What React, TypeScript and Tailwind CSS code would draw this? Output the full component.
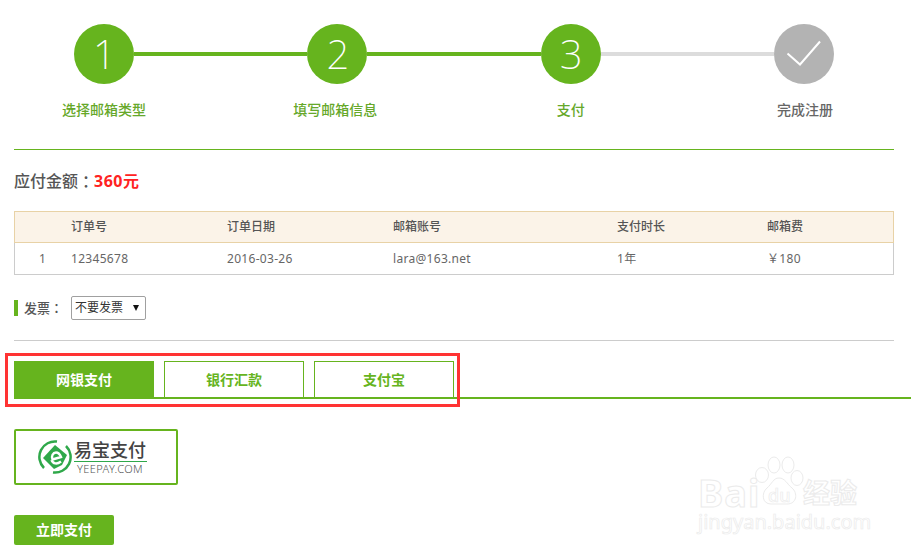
const steps = [
  { label: "选择邮箱类型", mark: "1", done: true, nudge: "" },
  { label: "填写邮箱信息", mark: "2", done: true, nudge: "-ml-1" },
  { label: "支付", mark: "3", done: true, nudge: "" },
  { label: "完成注册", mark: "", done: false, nudge: "ml-[2px]" },
];

const columns = "grid grid-cols-[56px_156px_166px_224px_150px_1fr] items-center";

const Colon = () => <span className="font-['Noto_Sans_CJK_TC']">：</span>;

const Stepper = () => (
  <div className="ml-[74px] flex w-[760px]">
    {steps.map((step, index) => (
      <div key={step.label} className={index < 3 ? "flex flex-1" : "flex"}>
        <div className="flex w-[60px] flex-col items-center">
          <div
            className={`flex h-[60px] w-[60px] items-center justify-center rounded-full pl-[1px] text-[40px] font-extralight text-white ${
              step.done ? "bg-[#66b41e]" : "bg-[#b3b3b3]"
            }`}
          >
            {step.mark || (
              <svg width="36" height="28" viewBox="0 0 36 28" fill="none">
                <path d="M1.5 13.5 14 24.5 34 1.5" stroke="#fff" strokeWidth="2" />
              </svg>
            )}
          </div>
          <div
            className={`mt-4 whitespace-nowrap text-sm font-medium leading-5 ${step.nudge} ${
              step.done ? "text-[#66a82a]" : "text-[#666]"
            }`}
          >
            {step.label}
          </div>
        </div>
        {index < 3 && (
          <div
            className={`mt-[28px] h-1 flex-1 ${
              index < 2 ? "bg-[#66b41e]" : "bg-[#dcdcdc]"
            }`}
          />
        )}
      </div>
    ))}
  </div>
);

const OrderTable = () => (
  <div className="mt-[18px] text-xs text-[#666]">
    <div className={`${columns} h-[32px] border border-[#e8d2a6] bg-[#fbf3e8] font-medium text-[#555]`}>
      <span />
      <span>订单号</span>
      <span>订单日期</span>
      <span>邮箱账号</span>
      <span>支付时长</span>
      <span>邮箱费</span>
    </div>
    <div className={`${columns} h-[32px] border border-t-0 border-[#ccc] tracking-[0.3px]`}>
      <span className="pl-[24px]">1</span>
      <span>12345678</span>
      <span>2016-03-26</span>
      <span>lara@163.net</span>
      <span>1年</span>
      <span>￥180</span>
    </div>
  </div>
);

const YeepayLogo = () => (
  <div className="mt-[30px] flex h-14 w-[164px] items-center justify-center gap-[2px] rounded-[2px] border-2 border-[#66b41e] bg-white pr-2">
    <svg width="34" height="34" viewBox="0 0 34 34" fill="none">
      <path d="M6 28A15.5 15.5 0 0 1 19 1.6" stroke="#2fa84a" strokeWidth="2.5" />
      <path d="M28 6A15.5 15.5 0 0 1 15 32.4" stroke="#2fa84a" strokeWidth="2.5" />
      <path d="M17 5 29 15 24 25 16 29 5 18Z" fill="#2fa84a" />
      <path
        d="M23 17 14.5 19.5C13 16 15 12.5 18 12.5 20.5 12.5 22 14.5 23 17ZM13.5 20C15 24 19 24.5 23 21.5"
        stroke="#fff"
        strokeWidth="2.4"
      />
    </svg>
    <div className="flex w-[73px] flex-col items-center">
      <span className="text-lg font-medium leading-[22px] text-[#444]">易宝支付</span>
      <span className="h-px w-full bg-[#2fa84a]" />
      <span className="mt-[1px] text-[11px] font-light leading-3 tracking-[0.4px] text-[#555]">YEEPAY.COM</span>
    </div>
  </div>
);

const Watermark = () => (
  <div className="absolute left-[698px] top-[456px] h-[76px] w-[165px] text-white">
    <span className="absolute left-0 top-[19px] text-[38px] font-bold leading-[34px] tracking-[1px] [-webkit-text-stroke:1px_#ebebeb]">
      Bai
    </span>
    <svg className="absolute left-[56px] top-0" width="50" height="50" viewBox="0 0 50 50" fill="#fff" stroke="#ebebeb" strokeWidth="1">
      <ellipse cx="8" cy="19" rx="6.5" ry="7.5" />
      <ellipse cx="20" cy="9" rx="6" ry="8" />
      <ellipse cx="34" cy="9" rx="6" ry="8" />
      <ellipse cx="43" cy="22" rx="6" ry="7.5" />
      <path d="M25 22C19 22 18 28 13 32 7 37 8 48 17 48L33 48C43 48 44 37 38 32 33 28 31 22 25 22Z" />
    </svg>
    <span className="absolute left-[70px] top-[29px] text-lg font-medium leading-5 text-white [-webkit-text-stroke:0.7px_#ebebeb]">
      du
    </span>
    <span className="absolute left-[105px] top-[22px] text-[27px] font-bold leading-[30px] [-webkit-text-stroke:1px_#ebebeb]">
      经验
    </span>
    <span className="absolute left-0 top-[55px] whitespace-nowrap text-[20px] leading-[22px] [-webkit-text-stroke:0.7px_#ebebeb]">
      jingyan.baidu.com
    </span>
  </div>
);

export default function App() {
  return (
    <div
      className="relative h-[553px] w-[911px] overflow-hidden bg-white pt-6"
      style={{ fontFamily: '"Noto Sans", "Noto Sans CJK SC", sans-serif' }}
    >
      <Stepper />

      <div className="ml-[14px] mr-[17px]">
        <div className="mt-[29px] h-px bg-[#66b41e]" />
        <div className="mt-[19px] flex h-6 items-center text-base font-medium text-[#555]">
          应付金额
          <Colon />
          <span className="font-bold tracking-[0.5px] text-[#ff2222]">360元</span>
        </div>
        <OrderTable />

        <div className="mt-[21px] flex h-6 items-center">
          <span className="h-4 w-1 bg-[#66b41e]" />
          <span className="ml-[6px] flex w-[47px] items-center text-[13px] font-medium leading-5 text-[#555]">
            发票
            <Colon />
          </span>
          <div className="relative h-6">
            <select className="block h-6 w-[75px] appearance-none rounded-[2px] border border-[#a0a0a0] bg-white pl-[3px] text-xs text-[#333]">
              <option>不要发票</option>
            </select>
            <svg className="absolute right-[7px] top-[9px]" width="6" height="6" viewBox="0 0 6 6">
              <path d="M0 0H6L3 6Z" fill="#111" />
            </svg>
          </div>
        </div>

        <div className="mt-5 h-px bg-[#ccc]" />
      </div>

      <div className="ml-[14px] mt-5 flex gap-[10px] border-b-2 border-[#66b41e]">
        <div className="-mb-[2px] flex h-[38px] w-[140px] items-center justify-center bg-[#66b41e] text-sm font-bold text-white">
          网银支付
        </div>
        <div className="flex h-9 w-[140px] items-center justify-center border border-b-0 border-[#66b41e] text-sm font-bold text-[#66b41e]">
          银行汇款
        </div>
        <div className="flex h-9 w-[140px] items-center justify-center border border-b-0 border-[#66b41e] text-sm font-bold text-[#66b41e]">
          支付宝
        </div>
      </div>

      <div className="ml-[14px]">
        <YeepayLogo />
        <button className="mt-[30px] flex h-[30px] w-[100px] items-center justify-center rounded-[2px] bg-[#66b41e] text-sm font-bold text-white">
          立即支付
        </button>
      </div>

      {/* red annotation box drawn over the tabs */}
      <div className="absolute left-[5px] top-[353px] h-[54px] w-[455px] border-[3px] border-[#ff3333]" />
      <Watermark />
    </div>
  );
}
